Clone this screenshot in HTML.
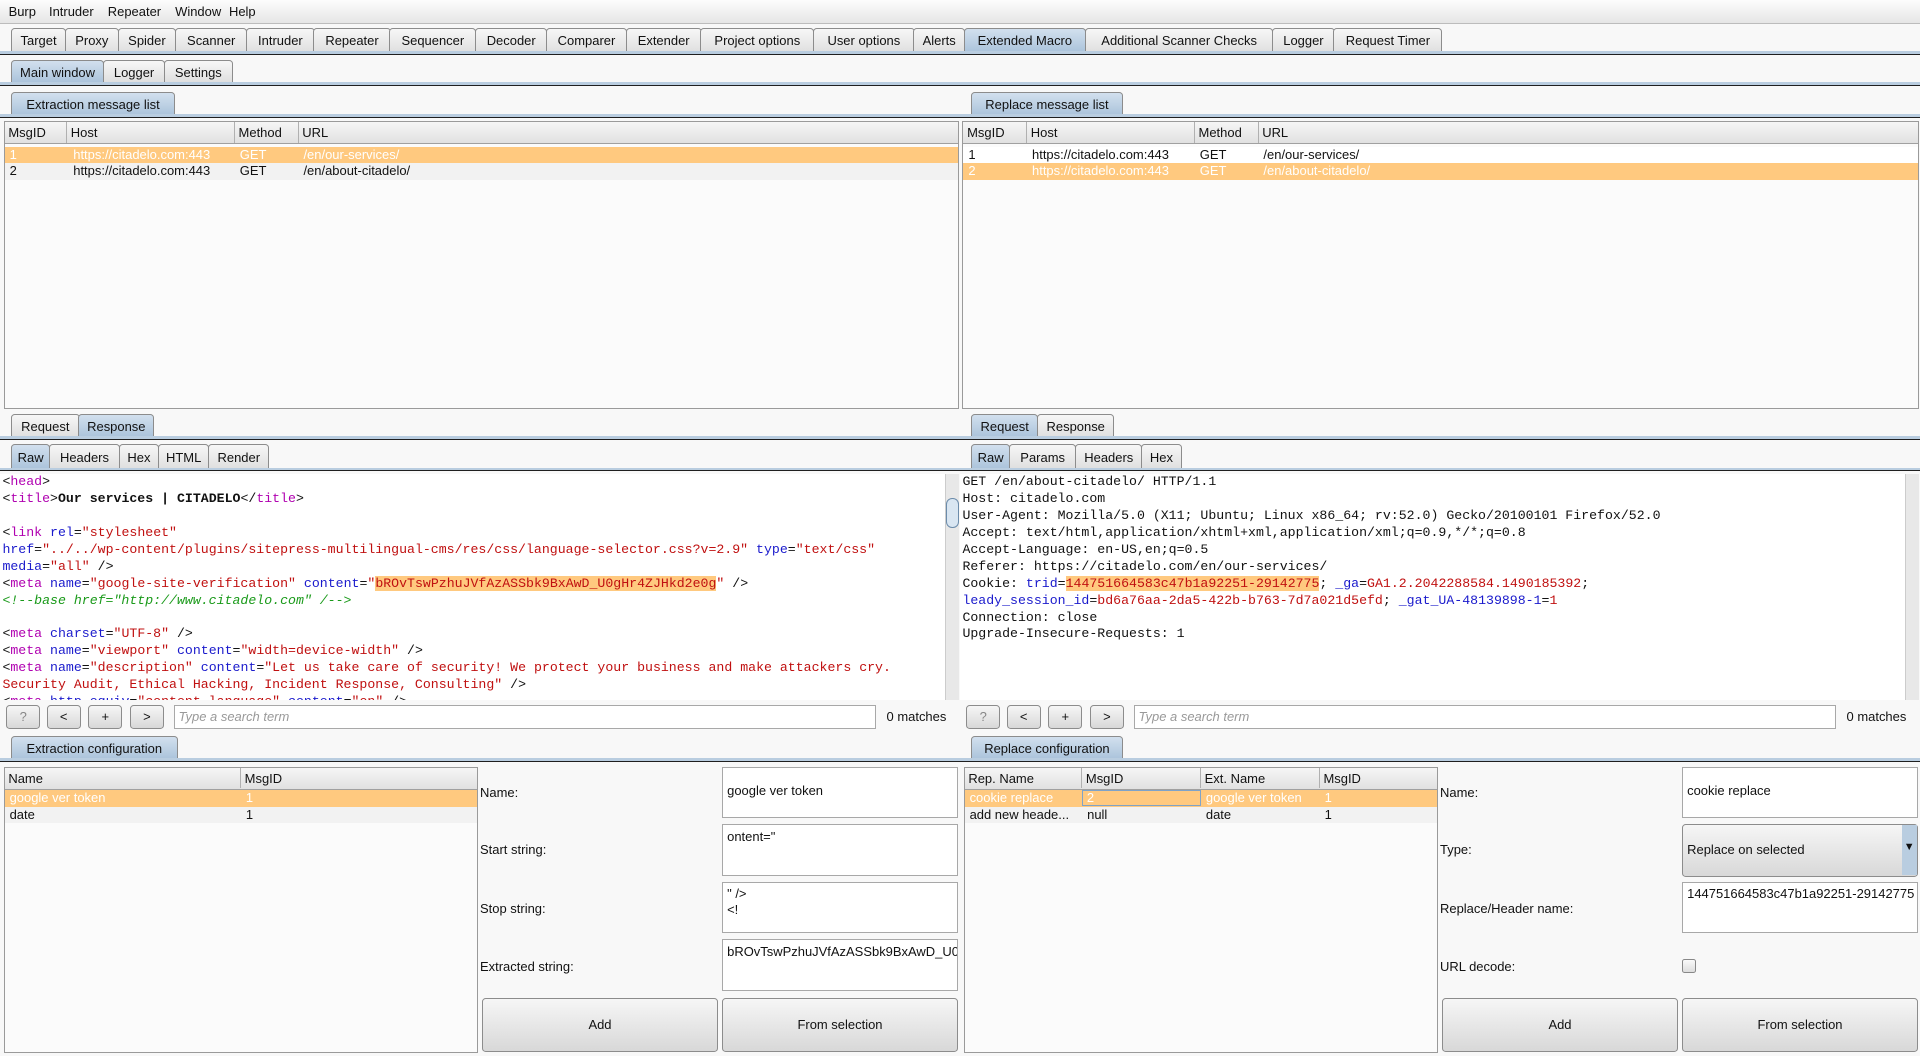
<!DOCTYPE html>
<html><head><meta charset="utf-8">
<style>
*{box-sizing:border-box;margin:0;padding:0}
html,body{width:1920px;height:1056px;overflow:hidden;background:#f8f8f8}
#w{zoom:1.22449;position:relative;width:1568px;height:862px;font-family:"Liberation Sans","DejaVu Sans",sans-serif;font-size:10.6px;color:#111}
.a{position:absolute}
.menu{left:0;top:0;width:1568px;height:20px;background:linear-gradient(#fdfdfd,#e6e6e6);border-bottom:1px solid #bcbcbc}
.menu span{position:absolute;top:3px}
.strip{position:absolute;display:flex}
.t{height:100%;border:1px solid #8c8c8c;border-bottom:none;border-radius:3px 3px 0 0;background:linear-gradient(#f7f7f7,#dedede);text-align:center;white-space:nowrap;margin-right:-1px;display:flex;align-items:center;justify-content:center}
.t.s{background:linear-gradient(#d2e0ee,#a9c2da)}
.line{position:absolute;height:3px;background:#b9cde0;border-bottom:1px solid #1f1f1f}
.box{position:absolute;background:#fbfbfb;border:1px solid #9a9a9a}
.hdr{position:absolute;left:0;top:0;height:18px;width:100%;background:linear-gradient(#f6f6f6,#e1e1e1);border-bottom:1px solid #a0a0a0}
.hdr span{position:absolute;top:0;height:17px;line-height:18px;padding-left:3px;border-right:1px solid #b0b0b0}
.row{position:absolute;left:0;width:100%;height:13.5px;line-height:13.5px}
.row span{position:absolute;top:0;padding-left:4px;white-space:nowrap}
.sel{background:#ffc97f;color:#fff}
.alt{background:#f2f2f2}
.code{position:absolute;background:#fff;font-family:"Liberation Mono","DejaVu Sans Mono",monospace;font-size:10.8px;line-height:13.85px;white-space:pre;overflow:hidden}
.tg{color:#b000b0}.at{color:#1a1acc}.vl{color:#c01010}.cm{color:#1a9a1a;font-style:italic}.hl{background:#ffc97f}
.sb{position:absolute;width:11px;background:#e8e8e8;border-left:1px solid #ccc}
.btn{position:absolute;border:1px solid #8c8c8c;border-radius:3px;background:linear-gradient(#f6f6f6,#d8d8d8);text-align:center}
.inp{position:absolute;background:#fff;border:1px solid #a8a8a8}
.lbl{position:absolute}
</style></head><body><div id="w">
<div class="a menu"><span style="left:7px">Burp</span><span style="left:40px">Intruder</span><span style="left:88px">Repeater</span><span style="left:143px">Window</span><span style="left:187px">Help</span></div>

<div class="strip" style="left:9px;top:23px;height:20px">
<div class="t" style="width:45px">Target</div><div class="t" style="width:44px">Proxy</div><div class="t" style="width:48px">Spider</div><div class="t" style="width:59px">Scanner</div><div class="t" style="width:56px">Intruder</div><div class="t" style="width:63px">Repeater</div><div class="t" style="width:71px">Sequencer</div><div class="t" style="width:59px">Decoder</div><div class="t" style="width:66px">Comparer</div><div class="t" style="width:62px">Extender</div><div class="t" style="width:93px">Project options</div><div class="t" style="width:83px">User options</div><div class="t" style="width:42px">Alerts</div><div class="t s" style="width:100px">Extended Macro</div><div class="t" style="width:154px">Additional Scanner Checks</div><div class="t" style="width:51px">Logger</div><div class="t" style="width:89px">Request Timer</div>
</div>
<div class="line" style="left:0;top:42px;width:1568px"></div>

<div class="strip" style="left:9px;top:49px;height:19px">
<div class="t s" style="width:76px">Main window</div><div class="t" style="width:51px">Logger</div><div class="t" style="width:56px">Settings</div></div>
<div class="line" style="left:0;top:67px;width:1568px"></div>

<!-- LEFT -->
<div class="strip" style="left:9px;top:75px;height:20px"><div class="t s" style="width:134px">Extraction message list</div></div>
<div class="line" style="left:0;top:93px;width:784px"></div>
<div class="box" style="left:3px;top:99px;width:780px;height:235px">
<div class="hdr"><span style="left:0;width:51px">MsgID</span><span style="left:51px;width:137px">Host</span><span style="left:188px;width:52px">Method</span><span style="left:240px;width:538px;border:none">URL</span></div>
<div class="row sel" style="top:20px"><span style="left:0">1</span><span style="left:52px">https://citadelo.com:443</span><span style="left:188px">GET</span><span style="left:240px">/en/our-services/</span></div>
<div class="row alt" style="top:33.5px"><span style="left:0">2</span><span style="left:52px">https://citadelo.com:443</span><span style="left:188px">GET</span><span style="left:240px">/en/about-citadelo/</span></div>
</div>
<div class="strip" style="left:9px;top:338px;height:20px"><div class="t" style="width:56px">Request</div><div class="t s" style="width:62px">Response</div></div>
<div class="line" style="left:0;top:356px;width:784px"></div>
<div class="strip" style="left:9px;top:363px;height:21px"><div class="t s" style="width:32px">Raw</div><div class="t" style="width:58px">Headers</div><div class="t" style="width:33px">Hex</div><div class="t" style="width:42px">HTML</div><div class="t" style="width:50px">Render</div></div>
<div class="line" style="left:0;top:382px;width:784px"></div>
<div class="code" style="left:0;top:387px;width:772px;height:185px;padding:0 2px">&lt;<span class="tg">head</span>&gt;
&lt;<span class="tg">title</span>&gt;<b>Our services | CITADELO</b>&lt;/<span class="tg">title</span>&gt;

&lt;<span class="tg">link</span> <span class="at">rel</span>=<span class="vl">"stylesheet"</span>
<span class="at">href</span>=<span class="vl">"../../wp-content/plugins/sitepress-multilingual-cms/res/css/language-selector.css?v=2.9"</span> <span class="at">type</span>=<span class="vl">"text/css"</span>
<span class="at">media</span>=<span class="vl">"all"</span> /&gt;
&lt;<span class="tg">meta</span> <span class="at">name</span>=<span class="vl">"google-site-verification"</span> <span class="at">content</span>=<span class="vl">"<span class="hl">bROvTswPzhuJVfAzASSbk9BxAwD_U0gHr4ZJHkd2e0g</span>"</span> /&gt;
<span class="cm">&lt;!--base href="http://www.citadelo.com" /--&gt;</span>

&lt;<span class="tg">meta</span> <span class="at">charset</span>=<span class="vl">"UTF-8"</span> /&gt;
&lt;<span class="tg">meta</span> <span class="at">name</span>=<span class="vl">"viewport"</span> <span class="at">content</span>=<span class="vl">"width=device-width"</span> /&gt;
&lt;<span class="tg">meta</span> <span class="at">name</span>=<span class="vl">"description"</span> <span class="at">content</span>=<span class="vl">"Let us take care of security! We protect your business and make attackers cry.
Security Audit, Ethical Hacking, Incident Response, Consulting"</span> /&gt;
&lt;<span class="tg">meta</span> <span class="at">http-equiv</span>=<span class="vl">"content-language"</span> <span class="at">content</span>=<span class="vl">"en"</span> /&gt;</div>
<div class="sb" style="left:772px;top:387px;height:185px"><div style="position:absolute;left:0;top:20px;width:10px;height:24px;border:1px solid #6c8cab;border-radius:5px;background:#d9e6f2"></div></div>
<div class="btn" style="left:5px;top:576px;width:28px;height:19px;line-height:18px;color:#888">?</div>
<div class="btn" style="left:38px;top:576px;width:28px;height:19px;line-height:18px">&lt;</div>
<div class="btn" style="left:72px;top:576px;width:28px;height:19px;line-height:18px">+</div>
<div class="btn" style="left:106px;top:576px;width:28px;height:19px;line-height:18px">&gt;</div>
<div class="inp" style="left:142px;top:576px;width:573px;height:19px;line-height:18px;padding-left:3px;color:#999;font-style:italic">Type a search term</div>
<div class="lbl" style="left:724px;top:579px">0 matches</div>

<div class="strip" style="left:9px;top:601px;height:20px"><div class="t s" style="width:136px">Extraction configuration</div></div>
<div class="line" style="left:0;top:619px;width:784px"></div>
<div class="box" style="left:3px;top:626px;width:387px;height:234px">
<div class="hdr"><span style="left:0;width:193px">Name</span><span style="left:193px;width:192px;border:none">MsgID</span></div>
<div class="row sel" style="top:18.5px"><span style="left:0">google ver token</span><span style="left:193px">1</span></div>
<div class="row alt" style="top:32px"><span style="left:0">date</span><span style="left:193px">1</span></div>
</div>
<div class="lbl" style="left:392px;top:641px">Name:</div>
<div class="inp" style="left:590px;top:626px;width:192px;height:42px;padding:13px 3px">google ver token</div>
<div class="lbl" style="left:392px;top:688px">Start string:</div>
<div class="inp" style="left:590px;top:673px;width:192px;height:42px;padding:3px">ontent="</div>
<div class="lbl" style="left:392px;top:736px">Stop string:</div>
<div class="inp" style="left:590px;top:720px;width:192px;height:42px;padding:3px;line-height:13px">" /&gt;<br>&lt;!</div>
<div class="lbl" style="left:392px;top:783px">Extracted string:</div>
<div class="inp" style="left:590px;top:767px;width:192px;height:42px;padding:3px;overflow:hidden;white-space:nowrap">bROvTswPzhuJVfAzASSbk9BxAwD_U0gHr</div>
<div class="btn" style="left:394px;top:815px;width:192px;height:44px;line-height:43px">Add</div>
<div class="btn" style="left:590px;top:815px;width:192px;height:44px;line-height:43px">From selection</div>

<!-- RIGHT -->
<div class="strip" style="left:793px;top:75px;height:20px"><div class="t s" style="width:124px">Replace message list</div></div>
<div class="line" style="left:784px;top:93px;width:784px"></div>
<div class="box" style="left:786px;top:99px;width:781px;height:235px">
<div class="hdr"><span style="left:0;width:52px">MsgID</span><span style="left:52px;width:137px">Host</span><span style="left:189px;width:52px">Method</span><span style="left:241px;width:538px;border:none">URL</span></div>
<div class="row" style="top:20px;background:#fff"><span style="left:0">1</span><span style="left:52px">https://citadelo.com:443</span><span style="left:189px">GET</span><span style="left:241px">/en/our-services/</span></div>
<div class="row sel" style="top:33.5px"><span style="left:0">2</span><span style="left:52px">https://citadelo.com:443</span><span style="left:189px">GET</span><span style="left:241px">/en/about-citadelo/</span></div>
</div>
<div class="strip" style="left:793px;top:338px;height:20px"><div class="t s" style="width:55px">Request</div><div class="t" style="width:63px">Response</div></div>
<div class="line" style="left:784px;top:356px;width:784px"></div>
<div class="strip" style="left:793px;top:363px;height:21px"><div class="t s" style="width:32px">Raw</div><div class="t" style="width:55px">Params</div><div class="t" style="width:55px">Headers</div><div class="t" style="width:33px">Hex</div></div>
<div class="line" style="left:784px;top:382px;width:784px"></div>
<div class="code" style="left:784px;top:387px;width:772px;height:185px;padding:0 2px">GET /en/about-citadelo/ HTTP/1.1
Host: citadelo.com
User-Agent: Mozilla/5.0 (X11; Ubuntu; Linux x86_64; rv:52.0) Gecko/20100101 Firefox/52.0
Accept: text/html,application/xhtml+xml,application/xml;q=0.9,*/*;q=0.8
Accept-Language: en-US,en;q=0.5
Referer: https://citadelo.com/en/our-services/
Cookie: <span class="at">trid</span>=<span class="vl hl">144751664583c47b1a92251-29142775</span>; <span class="at">_ga</span>=<span class="vl">GA1.2.2042288584.1490185392</span>;
<span class="at">leady_session_id</span>=<span class="vl">bd6a76aa-2da5-422b-b763-7d7a021d5efd</span>; <span class="at">_gat_UA-48139898-1</span>=<span class="vl">1</span>
Connection: close
Upgrade-Insecure-Requests: 1</div>
<div class="sb" style="left:1556px;top:387px;height:185px"></div>
<div class="btn" style="left:789px;top:576px;width:28px;height:19px;line-height:18px;color:#888">?</div>
<div class="btn" style="left:822px;top:576px;width:28px;height:19px;line-height:18px">&lt;</div>
<div class="btn" style="left:856px;top:576px;width:28px;height:19px;line-height:18px">+</div>
<div class="btn" style="left:890px;top:576px;width:28px;height:19px;line-height:18px">&gt;</div>
<div class="inp" style="left:926px;top:576px;width:573px;height:19px;line-height:18px;padding-left:3px;color:#999;font-style:italic">Type a search term</div>
<div class="lbl" style="left:1508px;top:579px">0 matches</div>

<div class="strip" style="left:793px;top:601px;height:20px"><div class="t s" style="width:124px">Replace configuration</div></div>
<div class="line" style="left:784px;top:619px;width:784px"></div>
<div class="box" style="left:787px;top:626px;width:387px;height:234px">
<div class="hdr"><span style="left:0;width:96px">Rep. Name</span><span style="left:96px;width:97px">MsgID</span><span style="left:193px;width:97px">Ext. Name</span><span style="left:290px;width:95px;border:none">MsgID</span></div>
<div class="row sel" style="top:18.5px"><span style="left:0">cookie replace</span><span style="left:96px;width:97px;height:13px;border:1px solid #7fa3c8;padding-left:3px;line-height:11px">2</span><span style="left:193px">google ver token</span><span style="left:290px">1</span></div>
<div class="row alt" style="top:32px"><span style="left:0">add new heade...</span><span style="left:96px">null</span><span style="left:193px">date</span><span style="left:290px">1</span></div>
</div>
<div class="lbl" style="left:1176px;top:641px">Name:</div>
<div class="inp" style="left:1374px;top:626px;width:192px;height:42px;padding:13px 3px">cookie replace</div>
<div class="lbl" style="left:1176px;top:688px">Type:</div>
<div class="btn" style="left:1374px;top:673px;width:192px;height:43px;text-align:left;padding:14px 3px">Replace on selected<span style="position:absolute;right:0;top:0;width:12px;height:41px;background:#b9cde0;font-size:9px;text-align:center;padding-top:13px">▼</span></div>
<div class="lbl" style="left:1176px;top:736px">Replace/Header name:</div>
<div class="inp" style="left:1374px;top:720px;width:192px;height:42px;padding:3px;overflow:hidden;white-space:nowrap">144751664583c47b1a92251-29142775</div>
<div class="lbl" style="left:1176px;top:783px">URL decode:</div>
<div class="a" style="left:1374px;top:783px;width:11px;height:12px;border:1px solid #888;border-radius:2px;background:linear-gradient(#fafafa,#ddd)"></div>
<div class="btn" style="left:1178px;top:815px;width:192px;height:44px;line-height:43px">Add</div>
<div class="btn" style="left:1374px;top:815px;width:192px;height:44px;line-height:43px">From selection</div>
</div></body></html>
